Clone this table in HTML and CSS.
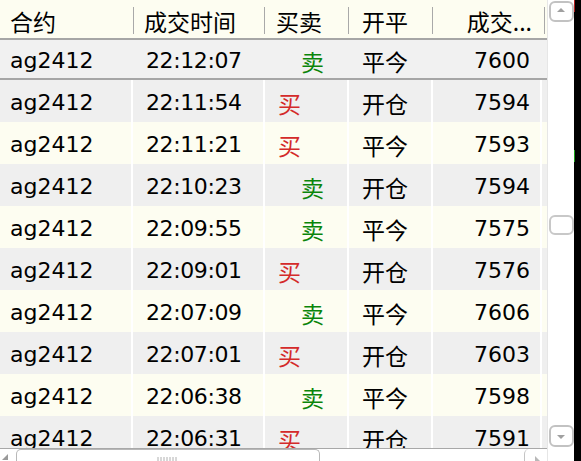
FILE: index.html
```html
<!DOCTYPE html>
<html lang="zh">
<head>
<meta charset="utf-8">
<title>成交记录</title>
<link rel="stylesheet" href="styles.css">
</head>
<body>
<div class="app">
  <div class="main">
    <div class="header">
      <div class="hc"><span class="cn">合约</span><span class="sep"></span></div>
      <div class="hc"><span class="cn">成交时间</span><span class="sep"></span></div>
      <div class="hc"><span class="cn">买卖</span><span class="sep"></span></div>
      <div class="hc"><span class="cn">开平</span><span class="sep"></span></div>
      <div class="hc hc-right"><span class="cn">成交...</span><span class="sep"></span></div>
      <div class="hc-fill"></div>
    </div>
    <div class="rows">
      <div class="row selected">
        <div class="cell c1">ag2412</div><div class="cell c2">22:12:07</div><div class="cell c3"><span class="cn sell">卖</span></div><div class="cell c4"><span class="cn">平今</span></div><div class="cell c5">7600</div><div class="cell fill"></div>
      </div>
      <div class="row">
        <div class="cell c1">ag2412</div><div class="cell c2">22:11:54</div><div class="cell c3"><span class="cn buy">买</span></div><div class="cell c4"><span class="cn">开仓</span></div><div class="cell c5">7594</div><div class="cell fill"></div>
      </div>
      <div class="row">
        <div class="cell c1">ag2412</div><div class="cell c2">22:11:21</div><div class="cell c3"><span class="cn buy">买</span></div><div class="cell c4"><span class="cn">平今</span></div><div class="cell c5">7593</div><div class="cell fill"></div>
      </div>
      <div class="row">
        <div class="cell c1">ag2412</div><div class="cell c2">22:10:23</div><div class="cell c3"><span class="cn sell">卖</span></div><div class="cell c4"><span class="cn">开仓</span></div><div class="cell c5">7594</div><div class="cell fill"></div>
      </div>
      <div class="row">
        <div class="cell c1">ag2412</div><div class="cell c2">22:09:55</div><div class="cell c3"><span class="cn sell">卖</span></div><div class="cell c4"><span class="cn">平今</span></div><div class="cell c5">7575</div><div class="cell fill"></div>
      </div>
      <div class="row">
        <div class="cell c1">ag2412</div><div class="cell c2">22:09:01</div><div class="cell c3"><span class="cn buy">买</span></div><div class="cell c4"><span class="cn">开仓</span></div><div class="cell c5">7576</div><div class="cell fill"></div>
      </div>
      <div class="row">
        <div class="cell c1">ag2412</div><div class="cell c2">22:07:09</div><div class="cell c3"><span class="cn sell">卖</span></div><div class="cell c4"><span class="cn">平今</span></div><div class="cell c5">7606</div><div class="cell fill"></div>
      </div>
      <div class="row">
        <div class="cell c1">ag2412</div><div class="cell c2">22:07:01</div><div class="cell c3"><span class="cn buy">买</span></div><div class="cell c4"><span class="cn">开仓</span></div><div class="cell c5">7603</div><div class="cell fill"></div>
      </div>
      <div class="row">
        <div class="cell c1">ag2412</div><div class="cell c2">22:06:38</div><div class="cell c3"><span class="cn sell">卖</span></div><div class="cell c4"><span class="cn">平今</span></div><div class="cell c5">7598</div><div class="cell fill"></div>
      </div>
      <div class="row">
        <div class="cell c1">ag2412</div><div class="cell c2">22:06:31</div><div class="cell c3"><span class="cn buy">买</span></div><div class="cell c4"><span class="cn">开仓</span></div><div class="cell c5">7591</div><div class="cell fill"></div>
      </div>
    </div>
    <div class="hscroll">
      <svg class="hs-corner" width="10" height="12" viewBox="0 0 10 12"><path d="M2 11 L8 5 L8 11 Z" fill="#9a9a9a"/></svg>
      <div class="hs-thumb">
        <svg width="22" height="6" viewBox="0 0 22 6"><path d="M1 1v5M4 1v5M7 1v5M10 1v5M13 1v5M16 1v5M19 1v5" stroke="#b0b0b0" stroke-width="1"/></svg>
      </div>
      <div class="hs-right">
        <svg width="10" height="10" viewBox="0 0 10 10"><path d="M3 3 L9 9 L3 9 Z" fill="#b8b8b8"/></svg>
      </div>
    </div>
  </div>
  <div class="vscroll">
    <div class="vbtn vbtn-up">
      <svg width="10" height="6" viewBox="0 0 10 6"><path d="M1 5 L5 1 L9 5 Z" fill="#a0a0a0"/></svg>
    </div>
    <div class="vthumb"></div>
    <div class="vbtn vbtn-down">
      <svg width="10" height="6" viewBox="0 0 10 6"><path d="M1 1 L9 1 L5 5 Z" fill="#a0a0a0"/></svg>
    </div>
  </div>
  <div class="edge">
    <div class="edge-red"></div>
    <div class="edge-green"></div>
  </div>
</div>
</body>
</html>
```
FILE: styles.css
```css
html, body {
  margin: 0;
  padding: 0;
  background: #fff;
}

.app {
  width: 581px;
  height: 461px;
  display: flex;
  overflow: hidden;
  font-family: "DejaVu Sans", "Noto Sans CJK SC", sans-serif;
  font-size: 22px;
  color: #000;
}

.cn {
  font-family: "Noto Sans CJK SC", sans-serif;
  font-size: 23px;
}

.main {
  width: 547px;
  display: flex;
  flex-direction: column;
}

/* header */
.header {
  height: 38px;
  flex: none;
  display: grid;
  grid-template-columns: 134px 131px 84px 84px 112px 2px;
  background: #fdfdf1;
}

.hc {
  display: flex;
  align-items: center;
  padding-left: 10px;
  padding-top: 3px;
}

.hc:nth-child(3) { padding-left: 11px; }
.hc:nth-child(4) { padding-left: 13px; }

.hc-right {
  justify-content: flex-end;
  padding-left: 0;
}

.hc-right .sep {
  margin-left: 12px;
}

.sep {
  margin-left: auto;
  width: 1px;
  height: 27px;
  background: #a9a9a9;
  align-self: center;
}

.hc-fill {
  background: #fdfdf1;
}

/* rows */
.rows {
  height: 410px;
  flex: none;
  overflow: hidden;
}

.row {
  display: grid;
  grid-template-columns: 133px 132px 84px 84px 109px 5px;
  height: 42px;
  box-sizing: border-box;
  background: #fdfdf1;
}

.row:nth-child(even) {
  background: #efefef;
}

.cell {
  display: flex;
  align-items: center;
  border-right: 2px solid #ffffff;
  white-space: nowrap;
  overflow: hidden;
  padding-top: 3px;
}

.cell.fill {
  border-right: none;
}

.c1 { padding-left: 10px; }
.c2 { padding-left: 13px; letter-spacing: -0.4px; }
.c3 { padding-left: 13px; }
.c4 { padding-left: 13px; }
.c5 { justify-content: flex-end; padding-right: 10px; }

.row.selected {
  background: #f1f1f1;
  border-top: 2px solid #a6a6a6;
  border-bottom: 2px solid #a6a6a6;
}

.row.selected .cell {
  border-right-color: transparent;
}

.buy { color: #d42a2a; }
.sell { color: #0a850a; margin-left: 23px; }

/* horizontal scrollbar */
.hscroll {
  height: 13px;
  flex: none;
  border-top: 1px solid #a8a8a8;
  background: #ffffff;
  display: flex;
  align-items: flex-start;
}

.hs-corner {
  flex: none;
}

.hs-thumb {
  margin-left: 6px;
  width: 304px;
  height: 14px;
  box-sizing: border-box;
  border: 1px solid #b8b8b8;
  border-bottom: none;
  border-radius: 5px 5px 0 0;
  display: flex;
  justify-content: center;
  align-items: flex-end;
  padding-bottom: 1px;
}

.hs-right {
  margin-left: auto;
  margin-right: 5px;
  width: 18px;
  height: 14px;
  box-sizing: border-box;
  border-left: 1px solid #c4c4c4;
  border-radius: 5px 0 0 0;
  display: flex;
  justify-content: flex-end;
  align-items: flex-end;
}

/* vertical scrollbar */
.vscroll {
  width: 27px;
  flex: none;
  background: #ffffff;
  border-left: 1px solid #e6e6e6;
  box-sizing: border-box;
  display: flex;
  flex-direction: column;
  align-items: center;
  padding-top: 1px;
}

.vbtn {
  width: 25px;
  height: 21px;
  box-sizing: border-box;
  border: 2px solid #c2c2c2;
  border-radius: 6px;
  display: flex;
  align-items: center;
  justify-content: center;
  flex: none;
}

.vbtn-up svg { margin-top: -3px; }
.vbtn-down svg { margin-top: 2px; }

.vthumb {
  width: 25px;
  height: 20px;
  box-sizing: border-box;
  border: 2px solid #c8c8c8;
  border-radius: 6px;
  margin-top: 193px;
  flex: none;
}

.vbtn-down {
  margin-top: auto;
  margin-bottom: 14px;
  height: 22px;
}

/* right edge */
.edge {
  width: 7px;
  flex: none;
  background: #000;
  display: flex;
  flex-direction: column;
}

.edge-red {
  width: 1px;
  height: 12px;
  background: #b32020;
}

.edge-green {
  width: 1px;
  height: 12px;
  margin-top: 138px;
  background: #1aa01a;
}
```
